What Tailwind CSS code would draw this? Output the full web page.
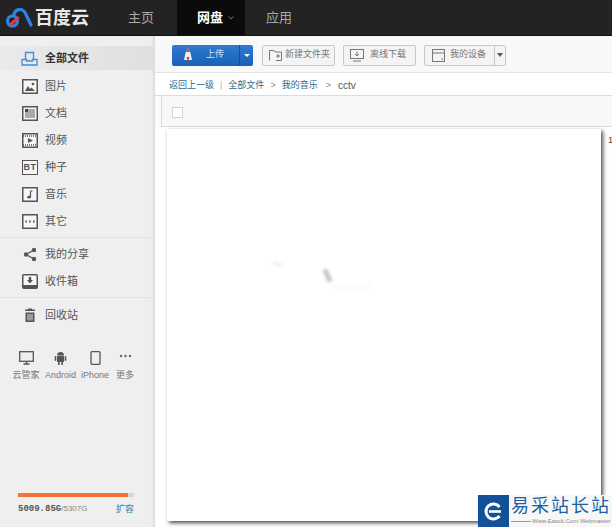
<!DOCTYPE html>
<html lang="zh">
<head>
    <meta charset="UTF-8">
    <title>百度云</title>
    <script src="https://cdn.jsdelivr.net/npm/@tailwindcss/browser@4"></script>
</head>
<body class="w-[612px] h-[527px] overflow-hidden bg-white relative font-['Liberation_Sans','Noto_Sans_CJK_SC',sans-serif]">
    <!-- Top bar -->
    <header class="h-[36px] bg-[#232323] flex items-stretch border-b border-[#111]">
        <div class="w-[128px] flex items-center pl-[5px] gap-[1px]">
            <svg width="29" height="24" viewBox="0 0 29 24" fill="none">
                <circle cx="7.5" cy="15" r="5" stroke="#2e83e6" stroke-width="3.2"/>
                <path d="M9 8 A6 6 0 0 1 20 6.5 L26 19" stroke="#2e83e6" stroke-width="3.2" stroke-linecap="round"/>
                <path d="M6 18 L13 12" stroke="#e23b3b" stroke-width="3" stroke-linecap="round"/>
            </svg>
            <span class="text-[18px] leading-none font-bold text-[#e8e8e8]">百度云</span>
        </div>
        <div class="w-[49px] flex items-center text-[13px] text-[#a9a9a9]">主页</div>
        <div class="w-[68px] bg-[#0b0b0b] flex items-center pl-[20px] gap-[5px] text-[13px] font-bold text-white">
            网盘
            <svg width="6" height="4" viewBox="0 0 6 4" fill="none"><path d="M0.5 0.5 L3 3 L5.5 0.5" stroke="#777" stroke-width="1"/></svg>
        </div>
        <div class="pl-[21px] flex items-center text-[13px] text-[#a9a9a9]">应用</div>
    </header>

    <div class="flex h-[491px]">
        <!-- Sidebar -->
        <aside class="w-[155px] shrink-0 bg-[#efefef] border-r border-[#dcdcdc] flex flex-col text-[11px] text-[#555] shadow-[inset_-3px_0_4px_-3px_rgba(0,0,0,0.12)]">
            <div class="h-[24px] mt-[10px] bg-gradient-to-r from-[#eaeaea] to-[#e0e0e0] flex items-center pl-[21px] gap-[7px] text-[#333] font-bold">
                <svg width="17" height="15" viewBox="0 0 17 15" fill="none" stroke="#3b8fe0" stroke-width="1.3">
                    <path d="M4.5 8 V1.5 H12.5 V8"/>
                    <path d="M1 8.5 H5.5 V10 H11.5 V8.5 H16 V14 H1 Z"/>
                </svg>
                全部文件
            </div>
            <nav class="flex flex-col pl-[22px] mt-[3px]">
                <div class="h-[27px] flex items-center gap-[7px]">
                    <svg width="16" height="15" viewBox="0 0 16 15"><rect x="0.75" y="0.75" width="14.5" height="13.5" fill="#f6f6f6" stroke="#555" stroke-width="1.5"/><path d="M3 12 L6 7 L8 10 L9.5 8.5 L13 12 Z" fill="#555"/><circle cx="11" cy="5" r="1.3" fill="#555"/></svg>
                    图片
                </div>
                <div class="h-[27px] flex items-center gap-[7px]">
                    <svg width="16" height="15" viewBox="0 0 16 15"><rect x="0.75" y="0.75" width="14.5" height="13.5" fill="#f6f6f6" stroke="#555" stroke-width="1.5"/><rect x="3" y="3" width="10" height="9" fill="#aaa"/><rect x="3" y="3" width="3" height="3" fill="#444"/></svg>
                    文档
                </div>
                <div class="h-[27px] flex items-center gap-[7px]">
                    <svg width="16" height="15" viewBox="0 0 16 15"><rect x="0.75" y="0.75" width="14.5" height="13.5" fill="#f6f6f6" stroke="#555" stroke-width="1.5"/><path d="M1 3 H15 M1 12 H15" stroke="#555" stroke-width="1.6" stroke-dasharray="1 1"/><path d="M6 5 L11 7.5 L6 10 Z" fill="#555"/></svg>
                    视频
                </div>
                <div class="h-[27px] flex items-center gap-[7px]">
                    <span class="w-[16px] h-[15px] border-[1.5px] border-[#555] bg-[#f6f6f6] text-[9px] leading-none font-bold flex items-center justify-center tracking-[0.5px]">BT</span>
                    种子
                </div>
                <div class="h-[27px] flex items-center gap-[7px]">
                    <svg width="16" height="15" viewBox="0 0 16 15"><rect x="0.75" y="0.75" width="14.5" height="13.5" fill="#f6f6f6" stroke="#555" stroke-width="1.5"/><path d="M8.5 4 V10 M8.5 4 H10.5" stroke="#555" stroke-width="1.2" fill="none"/><ellipse cx="7" cy="10.2" rx="1.8" ry="1.4" fill="#555"/></svg>
                    音乐
                </div>
                <div class="h-[27px] flex items-center gap-[7px]">
                    <svg width="16" height="15" viewBox="0 0 16 15"><rect x="0.75" y="0.75" width="14.5" height="13.5" fill="#f6f6f6" stroke="#555" stroke-width="1.5"/><path d="M3.5 7.5 H5 M7.2 7.5 H8.8 M11 7.5 H12.5" stroke="#555" stroke-width="1.8"/></svg>
                    其它
                </div>
            </nav>
            <div class="mt-[2px] border-t border-[#e2e2e2]"></div>
            <nav class="flex flex-col pl-[22px] mt-[3px]">
                <div class="h-[27px] flex items-center gap-[7px]">
                    <svg width="16" height="15" viewBox="0 0 16 15"><path d="M12 3 L4 7.5 L12 12" stroke="#555" stroke-width="1.3" fill="none"/><circle cx="12" cy="3" r="2.2" fill="#555"/><circle cx="4" cy="7.5" r="2.2" fill="#555"/><circle cx="12" cy="12" r="2.2" fill="#555"/></svg>
                    我的分享
                </div>
                <div class="h-[27px] flex items-center gap-[7px]">
                    <svg width="16" height="15" viewBox="0 0 16 15"><rect x="0.75" y="0.75" width="14.5" height="13.5" rx="1" fill="#f6f6f6" stroke="#555" stroke-width="1.5"/><rect x="1" y="11" width="14" height="3" fill="#555"/><path d="M6.8 3 H9.2 V6 H11 L8 9.5 L5 6 H6.8 Z" fill="#555"/></svg>
                    收件箱
                </div>
            </nav>
            <div class="mt-[2px] border-t border-[#e2e2e2]"></div>
            <nav class="flex flex-col pl-[22px] mt-[4px]">
                <div class="h-[27px] flex items-center gap-[7px]">
                    <svg width="16" height="15" viewBox="0 0 16 15"><path d="M3 1.5 H13 V3 H3 Z M6 0.5 H10 V1.5 H6 Z" fill="#555"/><path d="M3.5 4.5 H12.5 V14 H3.5 Z" fill="#555"/><path d="M6 6 V12.5 M8 6 V12.5 M10 6 V12.5" stroke="#eee" stroke-width="0.9"/></svg>
                    回收站
                </div>
            </nav>
            <div class="mt-[22px] pl-[12px] flex text-[9px] text-[#777]">
                <div class="w-[36px] flex flex-col items-center gap-[4px] -ml-[4px]">
                    <svg width="15" height="14" viewBox="0 0 15 14" fill="none" stroke="#555" stroke-width="1.3"><rect x="0.7" y="0.7" width="13.6" height="9.6"/><path d="M7.5 10.5 V13 M4.5 13 H10.5"/></svg>
                    <span>云管家</span>
                </div>
                <div class="w-[33px] flex flex-col items-center gap-[4px]">
                    <svg width="13" height="14" viewBox="0 0 13 14" fill="#555"><path d="M3 4.5 A3.5 3.5 0 0 1 10 4.5 Z"/><rect x="3" y="5" width="7" height="6" rx="0.5"/><rect x="0.7" y="5" width="1.6" height="5" rx="0.8"/><rect x="10.7" y="5" width="1.6" height="5" rx="0.8"/><rect x="4" y="11" width="1.8" height="3" rx="0.8"/><rect x="7.2" y="11" width="1.8" height="3" rx="0.8"/></svg>
                    <span>Android</span>
                </div>
                <div class="w-[36px] flex flex-col items-center gap-[4px]">
                    <svg width="11" height="14" viewBox="0 0 11 14" fill="none" stroke="#555" stroke-width="1.3"><rect x="1" y="0.7" width="9" height="12.6" rx="1"/></svg>
                    <span>iPhone</span>
                </div>
                <div class="w-[24px] flex flex-col items-center gap-[4px]">
                    <svg width="13" height="14" viewBox="0 0 13 14" fill="#666"><circle cx="2" cy="5" r="1.2"/><circle cx="6.5" cy="5" r="1.2"/><circle cx="11" cy="5" r="1.2"/></svg>
                    <span>更多</span>
                </div>
            </div>
            <!-- Quota -->
            <div class="mt-auto mb-[12px] pl-[18px] pr-[20px]">
                <div class="h-[4px] bg-[#d5d8e0]">
                    <div class="h-full bg-[#f47437]" style="width:95%"></div>
                </div>
                <div class="mt-[6px] flex items-center justify-between text-[8px] leading-[12px]">
                    <span class="text-[#888]"><b class="text-[#555] text-[9px] font-['Liberation_Mono']">5009.85G</b>/5307G</span>
                    <span class="text-[#3a7ea6] text-[9px]">扩容</span>
                </div>
            </div>
        </aside>

        <!-- Main -->
        <main class="flex-1 flex flex-col bg-[#fafafa]">
            <div class="h-[37px] shrink-0 flex items-center pl-[17px] pt-[2px] bg-[#f8f8f8] border-b border-[#e3e3e3] text-[9px] text-[#777]">
                <div class="h-[21px] w-[81px] rounded-[2px] bg-gradient-to-b from-[#2e7ad0] to-[#1762b8] flex items-stretch text-[#cfe0f5]">
                    <div class="flex-1 flex items-center pl-[10px] gap-[12px]">
                        <svg width="12" height="14" viewBox="0 0 12 14"><path d="M6 0 L8.5 5 L10 12 H2 L3.5 5 Z" fill="#eee"/><path d="M6 0 L8 4 H4 Z" fill="#d8413a"/><path d="M4.5 9 H7.5 L6 14 Z" fill="#d8413a"/></svg>
                        上传
                    </div>
                    <div class="w-[14px] border-l border-[#15508f] flex items-center justify-center">
                        <span class="border-x-[3px] border-x-transparent border-t-[3px] border-t-white"></span>
                    </div>
                </div>
                <div class="ml-[9px] h-[21px] w-[73px] border border-[#c8c8c8] rounded-[2px] bg-[#f4f4f4] flex items-center pl-[6px] gap-[3px]">
                    <svg width="13" height="11" viewBox="0 0 13 11" fill="none" stroke="#777"><path d="M0.5 10.5 V0.5 H5 L6 2 H12.5 V10.5 H7"/><path d="M7 6 H11 M9 4 V8"/></svg>
                    新建文件夹
                </div>
                <div class="ml-[8px] h-[21px] w-[73px] border border-[#c8c8c8] rounded-[2px] bg-[#f4f4f4] flex items-center pl-[6px] gap-[6px]">
                    <svg width="14" height="13" viewBox="0 0 14 13" fill="none" stroke="#777"><rect x="0.5" y="0.5" width="13" height="9"/><path d="M7 2.5 V7 M5 5 L7 7 L9 5 M3 12 H11"/></svg>
                    离线下载
                </div>
                <div class="ml-[8px] h-[21px] w-[82px] border border-[#c8c8c8] rounded-[2px] bg-[#f4f4f4] flex items-stretch">
                    <div class="flex-1 flex items-center pl-[7px] gap-[5px]">
                        <svg width="13" height="13" viewBox="0 0 13 13" fill="none" stroke="#777"><rect x="0.5" y="0.5" width="12" height="12"/><path d="M0.5 4 H12.5"/><path d="M9.5 10 H11" stroke="#555"/></svg>
                        我的设备
                    </div>
                    <div class="w-[11px] border-l border-[#c8c8c8] flex items-center justify-center">
                        <span class="border-x-[3.5px] border-x-transparent border-t-[4px] border-t-[#555]"></span>
                    </div>
                </div>
            </div>
            <div class="h-[23px] shrink-0 bg-white border-b border-[#dcdcdc] flex items-center pl-[14px] pt-[3px] text-[9px] text-[#2b6a8e]">
                返回上一级
                <span class="mx-[6px] text-[#bbb]">|</span>
                全部文件
                <span class="mx-[6px] text-[#888]">&gt;</span>
                我的音乐
                <span class="ml-[8px] mr-[7px] text-[#888]">&gt;</span>
                <span class="text-[#555] text-[10px]">cctv</span>
            </div>
            <div class="h-[31px] shrink-0 bg-[#f8f8f8] border-b border-[#dcdcdc] ml-[6px] border-l flex items-center pl-[10px] pt-[3px]">
                <span class="w-[11px] h-[11px] border border-[#d5d5d5] bg-white"></span>
            </div>
            <div class="flex-1 bg-white"></div>
        </main>
    </div>

    <!-- Popup over the file list -->
    <div class="absolute left-[167px] top-[129px] w-[434px] h-[392px] bg-white shadow-[2px_2px_4px_rgba(0,0,0,0.7)]">
        <div class="absolute left-[106px] top-[133px] w-[10px] h-[4px] rounded-full bg-[#f2f2f2] blur-[1px] rotate-[20deg]"></div>
        <div class="absolute left-[158px] top-[140px] w-[5px] h-[13px] bg-[#c4c4c4] blur-[1.5px] rotate-[-25deg]"></div>
        <div class="absolute left-[165px] top-[155px] w-[40px] h-[6px] bg-[#fbfbfb] blur-[2px]"></div>
    </div>
    <span class="absolute left-[608px] top-[136px] text-[9px] leading-none text-[#444]">1</span>

    <!-- Watermark -->
    <div class="absolute left-[478px] top-[495px] w-[134px] h-[32px] bg-[#f7f7f7] flex">
        <div class="w-[31px] h-[32px] bg-[#13509a] flex items-center justify-center">
            <svg width="19" height="19" viewBox="0 0 19 19" fill="none"><path d="M15.5 5 A7.5 7.5 0 1 0 15.5 14" stroke="#fff" stroke-width="3"/><path d="M5 9.5 H17" stroke="#fff" stroke-width="2.6"/></svg>
        </div>
        <div class="flex-1 pl-[2px] pt-[1px] flex flex-col">
            <span class="text-[18px] leading-[21px] text-[#1c5fa5] tracking-[2px] whitespace-nowrap">易采站长站</span>
            <div class="flex items-center gap-[1px]">
                <span class="w-[20px] h-px bg-[#999]"></span>
                <span class="text-[6px] leading-[8px] text-[#888] whitespace-nowrap">Www.Easck.Com Webmaster</span>
            </div>
        </div>
    </div>
</body>
</html>
